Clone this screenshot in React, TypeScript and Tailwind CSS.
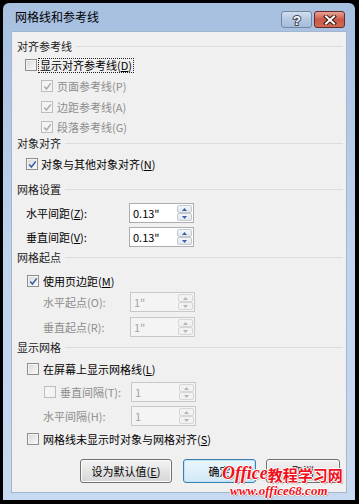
import React from "react";

function Box({ checked, disabled }: { checked?: boolean; disabled?: boolean }) {
  return (
    <span
      className={`flex h-[12px] w-[12px] shrink-0 items-center justify-center border ${
        disabled
          ? "border-[#bdbdbd] bg-[#f4f4f4]"
          : "border-[#8e8f8f] bg-gradient-to-br from-[#d8d8d8] to-[#fbfbfb] shadow-[inset_0_0_0_1px_#f2f2f2]"
      }`}
    >
      {checked && (
        <svg width="9" height="9" viewBox="0 0 9 9">
          <path
            d="M1.2 4.6 L3.4 7 L7.8 1.4"
            stroke={disabled ? "#ababab" : "#3a5aa8"}
            strokeWidth="1.5"
            fill="none"
          />
        </svg>
      )}
    </span>
  );
}

function Header({ text, cls }: { text: string; cls: string }) {
  return (
    <div className={`flex h-[20px] items-center pl-[5px] pr-[3px] ${cls}`}>
      <span className="text-[11px] leading-none text-[#1c1c1c]">{text}</span>
      <span className="ml-[4px] h-px flex-1 bg-[#d9dde2]" />
    </div>
  );
}

function Arrow({ up, disabled }: { up?: boolean; disabled?: boolean }) {
  return (
    <div
      className={`flex flex-1 items-center justify-center rounded-[2px] border ${
        disabled
          ? "border-[#d6d6d6] bg-[#f2f2f2]"
          : "border-[#c2c8d0] bg-gradient-to-b from-[#f4f6f9] to-[#e2e6eb]"
      }`}
    >
      <svg width="5" height="3" viewBox="0 0 5 3">
        <path
          d={up ? "M0 3 L2.5 0 L5 3Z" : "M0 0 L2.5 3 L5 0Z"}
          fill={disabled ? "#b4b4b4" : "#3c5fa6"}
        />
      </svg>
    </div>
  );
}

function Spin({ value, disabled }: { value: string; disabled?: boolean }) {
  return (
    <div
      className={`flex h-[20px] w-[65px] items-stretch border p-px ${
        disabled ? "border-[#c8c8c8] bg-[#f4f4f4] text-[#a3a3a3]" : "border-[#abadb3] bg-white text-black"
      }`}
    >
      <span className="flex flex-1 items-center pl-[2px] text-[11px] leading-none">{value}</span>
      <div className="flex w-[15px] flex-col">
        <Arrow up disabled={disabled} />
        <Arrow disabled={disabled} />
      </div>
    </div>
  );
}

function Btn({ children, w, primary }: { children: React.ReactNode; w: string; primary?: boolean }) {
  return (
    <div
      className={`flex h-[24px] items-center justify-center rounded-[3px] border text-[11px] text-black ${w} ${
        primary
          ? "border-[#3c7fb1] bg-gradient-to-b from-[#eaf6fd] to-[#d3e9f7] shadow-[inset_0_0_0_1px_#bfe3f8]"
          : "border-[#707070] bg-gradient-to-b from-[#f3f3f3] to-[#d6d6d6] shadow-[inset_0_0_0_1px_#fcfcfc]"
      }`}
    >
      {children}
    </div>
  );
}

export default function App() {
  const dis = "text-[#8d8d8d]";
  return (
    <div className="h-[504px] w-[359px] bg-black pl-[3px] pt-[3px] font-['Noto_Sans_CJK_SC','Noto_Sans',sans-serif]">
      <div className="flex h-[497px] w-[352px] flex-col rounded-t-[6px] bg-gradient-to-b from-[#a7c0e0] via-[#bed3ec] to-[#c8daef]">
        {/* title bar */}
        <div className="flex h-[28px] items-start">
          <span className="self-center pl-[12px] text-[12px] leading-none text-black">网格线和参考线</span>
          <div className="ml-auto mr-[10px] mt-[8px] flex gap-[2px]">
            <div className="flex h-[17px] w-[31px] items-center justify-center rounded-[3px] border border-[#7586a0] bg-gradient-to-b from-[#d2e0f0] via-[#b4c8e2] to-[#a5bddb]">
              <svg width="12" height="14" viewBox="0 0 12 14">
                <text
                  x="6"
                  y="12"
                  textAnchor="middle"
                  fontSize="13"
                  fontWeight="bold"
                  fontFamily="Liberation Sans, sans-serif"
                  fill="#ffffff"
                  stroke="#3c4a5c"
                  strokeWidth="2"
                  paintOrder="stroke"
                >
                  ?
                </text>
              </svg>
            </div>
            <div className="flex h-[17px] w-[31px] items-center justify-center rounded-[3px] border border-[#6b2a26] bg-gradient-to-b from-[#e7a396] via-[#c9584a] to-[#d06a52]">
              <svg width="14" height="10" viewBox="0 0 14 10">
                <path d="M3 1.5 L11 8.5 M11 1.5 L3 8.5" stroke="#3b1a17" strokeWidth="4" strokeLinecap="square" />
                <path d="M3 1.5 L11 8.5 M11 1.5 L3 8.5" stroke="#ffffff" strokeWidth="2" strokeLinecap="square" />
              </svg>
            </div>
          </div>
        </div>
        {/* body */}
        <div className="flex">
          <div className="w-[8px]" />
          <div className="relative flex h-[462px] w-[336px] flex-col border border-[#a3b6cf] bg-[#f0f0f0] pt-[4px] text-[11px] leading-none text-black">
            <Header text="对齐参考线" cls="" />
            <div className="-mt-px flex h-[20px] items-center pl-[13px]">
              <Box />
              <span className="ml-px border border-dotted border-[#222] px-px py-[1px]">
                显示对齐参考线(<u>D</u>)
              </span>
            </div>
            <div className={`mt-[1px] flex h-[20px] items-center gap-[4px] pl-[29px] ${dis}`}>
              <Box checked disabled />
              <span>页面参考线(P)</span>
            </div>
            <div className={`mt-[1px] flex h-[20px] items-center gap-[4px] pl-[29px] ${dis}`}>
              <Box checked disabled />
              <span>边距参考线(A)</span>
            </div>
            <div className={`flex h-[20px] items-center gap-[4px] pl-[29px] ${dis}`}>
              <Box checked disabled />
              <span>段落参考线(G)</span>
            </div>

            <Header text="对象对齐" cls="-mt-[4px]" />
            <div className="mt-[1px] flex h-[20px] items-center gap-[3px] pl-[14px]">
              <Box checked />
              <span>
                对象与其他对象对齐(<u>N</u>)
              </span>
            </div>

            <Header text="网格设置" cls="mt-[5px]" />
            <div className="mt-[4px] flex h-[20px] items-center pl-[14px]">
              <span className="w-[103px]">
                水平间距(<u>Z</u>):
              </span>
              <Spin value={'0.13"'} />
            </div>
            <div className="mt-[4px] flex h-[20px] items-center pl-[14px]">
              <span className="w-[103px]">
                垂直间距(<u>V</u>):
              </span>
              <Spin value={'0.13"'} />
            </div>

            <Header text="网格起点" cls="" />
            <div className="mt-[4px] flex h-[20px] items-center gap-[4px] pl-[15px]">
              <Box checked />
              <span>
                使用页边距(<u>M</u>)
              </span>
            </div>
            <div className={`mt-[1px] flex h-[20px] items-center pl-[31px] ${dis}`}>
              <span className="w-[87px]">水平起点(O):</span>
              <Spin value={'1"'} disabled />
            </div>
            <div className={`mt-[5px] flex h-[20px] items-center pl-[31px] ${dis}`}>
              <span className="w-[87px]">垂直起点(R):</span>
              <Spin value={'1"'} disabled />
            </div>

            <Header text="显示网格" cls="" />
            <div className="mt-[2px] flex h-[20px] items-center gap-[4px] pl-[15px]">
              <Box />
              <span>
                在屏幕上显示网格线(<u>L</u>)
              </span>
            </div>
            <div className={`mt-[3px] flex h-[20px] items-center pl-[32px] ${dis}`}>
              <Box disabled />
              <span className="ml-[4px] w-[71px]">垂直间隔(T):</span>
              <Spin value="1" disabled />
            </div>
            <div className={`mt-[4px] flex h-[20px] items-center pl-[31px] ${dis}`}>
              <span className="w-[88px]">水平间隔(H):</span>
              <Spin value="1" disabled />
            </div>
            <div className="mt-[3px] flex h-[20px] items-center gap-[4px] pl-[15px]">
              <Box />
              <span>
                网格线未显示时对象与网格对齐(<u>S</u>)
              </span>
            </div>

            <div className="mt-[10px] flex pl-[68px]">
              <Btn w="w-[92px]">
                设为默认值(<u>E</u>)
              </Btn>
              <div className="ml-[11px]">
                <Btn w="w-[73px]" primary>
                  确定
                </Btn>
              </div>
              <div className="ml-[10px]">
                <Btn w="w-[74px]">取消</Btn>
              </div>
            </div>

            {/* watermark */}
            <div className="pointer-events-none absolute left-[210px] top-[432px] flex flex-col leading-none text-[#f01020] [text-shadow:1px_0_0_#fff,-1px_0_0_#fff,0_1px_0_#fff,0_-1px_0_#fff,1px_1px_1px_#777]">
              <div className="flex items-end whitespace-nowrap">
                <span className="font-['Liberation_Serif',serif] text-[18px] font-bold italic">Office</span>
                <span className="text-[15px] font-bold">教程学习网</span>
              </div>
              <span className="mt-[2px] ml-[8px] whitespace-nowrap font-['Liberation_Serif',serif] text-[13px] font-bold italic">
                www.office68.com
              </span>
            </div>
          </div>
          <div className="w-[8px]" />
        </div>
      </div>
    </div>
  );
}
